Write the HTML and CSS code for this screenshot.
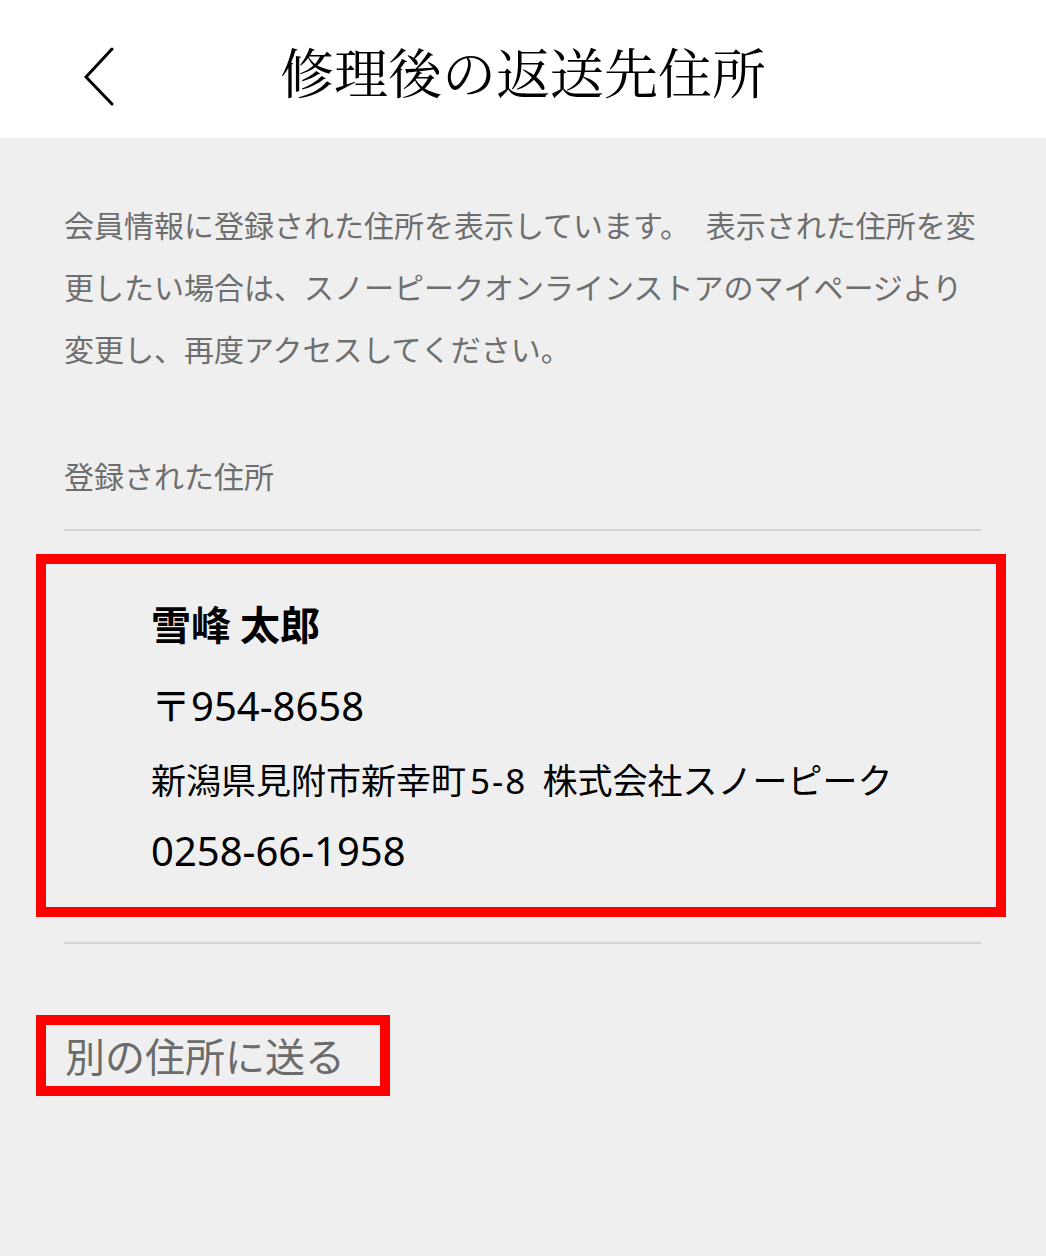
FILE: index.html
```html
<!DOCTYPE html>
<html lang="ja">
<head>
<meta charset="utf-8">
<title>修理後の返送先住所</title>
<link rel="stylesheet" href="styles.css">
</head>
<body>
<header class="topbar">
  <div class="topbar-left">
    <svg class="back-icon" width="30" height="60" viewBox="0 0 30 60" aria-hidden="true">
      <path d="M28 3 L2 31 L28 58" fill="none" stroke="#000" stroke-width="3" stroke-linecap="round" stroke-linejoin="miter"/>
    </svg>
  </div>
  <h1 class="topbar-title">修理後の返送先住所</h1>
  <div class="topbar-right"></div>
</header>
<main class="content">
  <p class="notice">会員情報に登録された住所を表示しています。 表示された住所を変更したい場合は、スノーピークオンラインストアのマイページより変更し、再度アクセスしてください。</p>
  <div class="section-label">登録された住所</div>
  <hr class="divider">
  <div class="address-card">
    <div class="addr-name">雪峰 太郎</div>
    <div class="addr-line addr-postal">〒954-8658</div>
    <div class="addr-line addr-street">新潟県見附市新幸町<span class="num">5-8</span> 株式会社スノーピーク</div>
    <div class="addr-line addr-phone">0258-66-1958</div>
  </div>
  <hr class="divider divider-bottom">
  <div class="other-address">別の住所に送る</div>
</main>
</body>
</html>
```
FILE: styles.css
```css
html, body {
  margin: 0;
  padding: 0;
}

body {
  background: #efefef;
  width: 1046px;
  min-height: 1256px;
  font-family: "Noto Sans CJK JP", "Noto Sans", sans-serif;
  color: #000;
}

.topbar {
  background: #ffffff;
  height: 138px;
  display: grid;
  grid-template-columns: 1fr auto 1fr;
  align-items: center;
}

.topbar-left {
  padding-left: 84px;
  display: flex;
  align-items: center;
  padding-top: 13px;
}

.back-icon {
  display: block;
}

.topbar-title {
  margin: 0;
  padding-top: 5px;
  font-family: "Noto Serif CJK JP", "Noto Sans CJK JP", serif;
  font-size: 54px;
  font-weight: 400;
  line-height: 1.448;
  color: #000;
}

.content {
  padding: 55px 65px 0 64px;
}

.notice {
  margin: 0 -10px 0 0;
  font-size: 30px;
  line-height: 62px;
  word-spacing: 9px;
  color: #6e6e6e;
}

.section-label {
  margin-top: 65px;
  font-size: 30px;
  line-height: 62px;
  color: #6e6e6e;
}

.divider {
  margin: 23px 0 0 0;
  border: 0;
  height: 2px;
  background: #d4d4d4;
}

.address-card {
  margin: 23px -25px 0 -28px;
  border: 10px solid #ff0000;
  padding: 34px 0 31px 105px;
  font-family: "Noto Sans", "Noto Sans CJK JP", sans-serif;
  color: #000;
  display: flex;
  flex-direction: column;
}

.addr-name {
  font-family: "Noto Sans CJK JP", "Noto Sans", sans-serif;
  font-size: 40px;
  font-weight: 700;
  line-height: 50px;
}

.addr-line {
  font-size: 40px;
  line-height: 50px;
}

.addr-postal {
  margin-top: 33px;
}

.addr-street {
  margin-top: 25px;
  font-size: 35px;
  word-spacing: 6px;
}

.addr-street .num {
  margin-left: 4px;
  letter-spacing: 2px;
}

.addr-phone {
  margin-top: 20px;
}

.divider-bottom {
  margin-top: 25px;
}

.other-address {
  margin: 71px 0 0 -28px;
  width: fit-content;
  border: 10px solid #ff0000;
  padding: 0 35px 0 19px;
  font-size: 40px;
  line-height: 61px;
  color: #6b6b6b;
}
```
